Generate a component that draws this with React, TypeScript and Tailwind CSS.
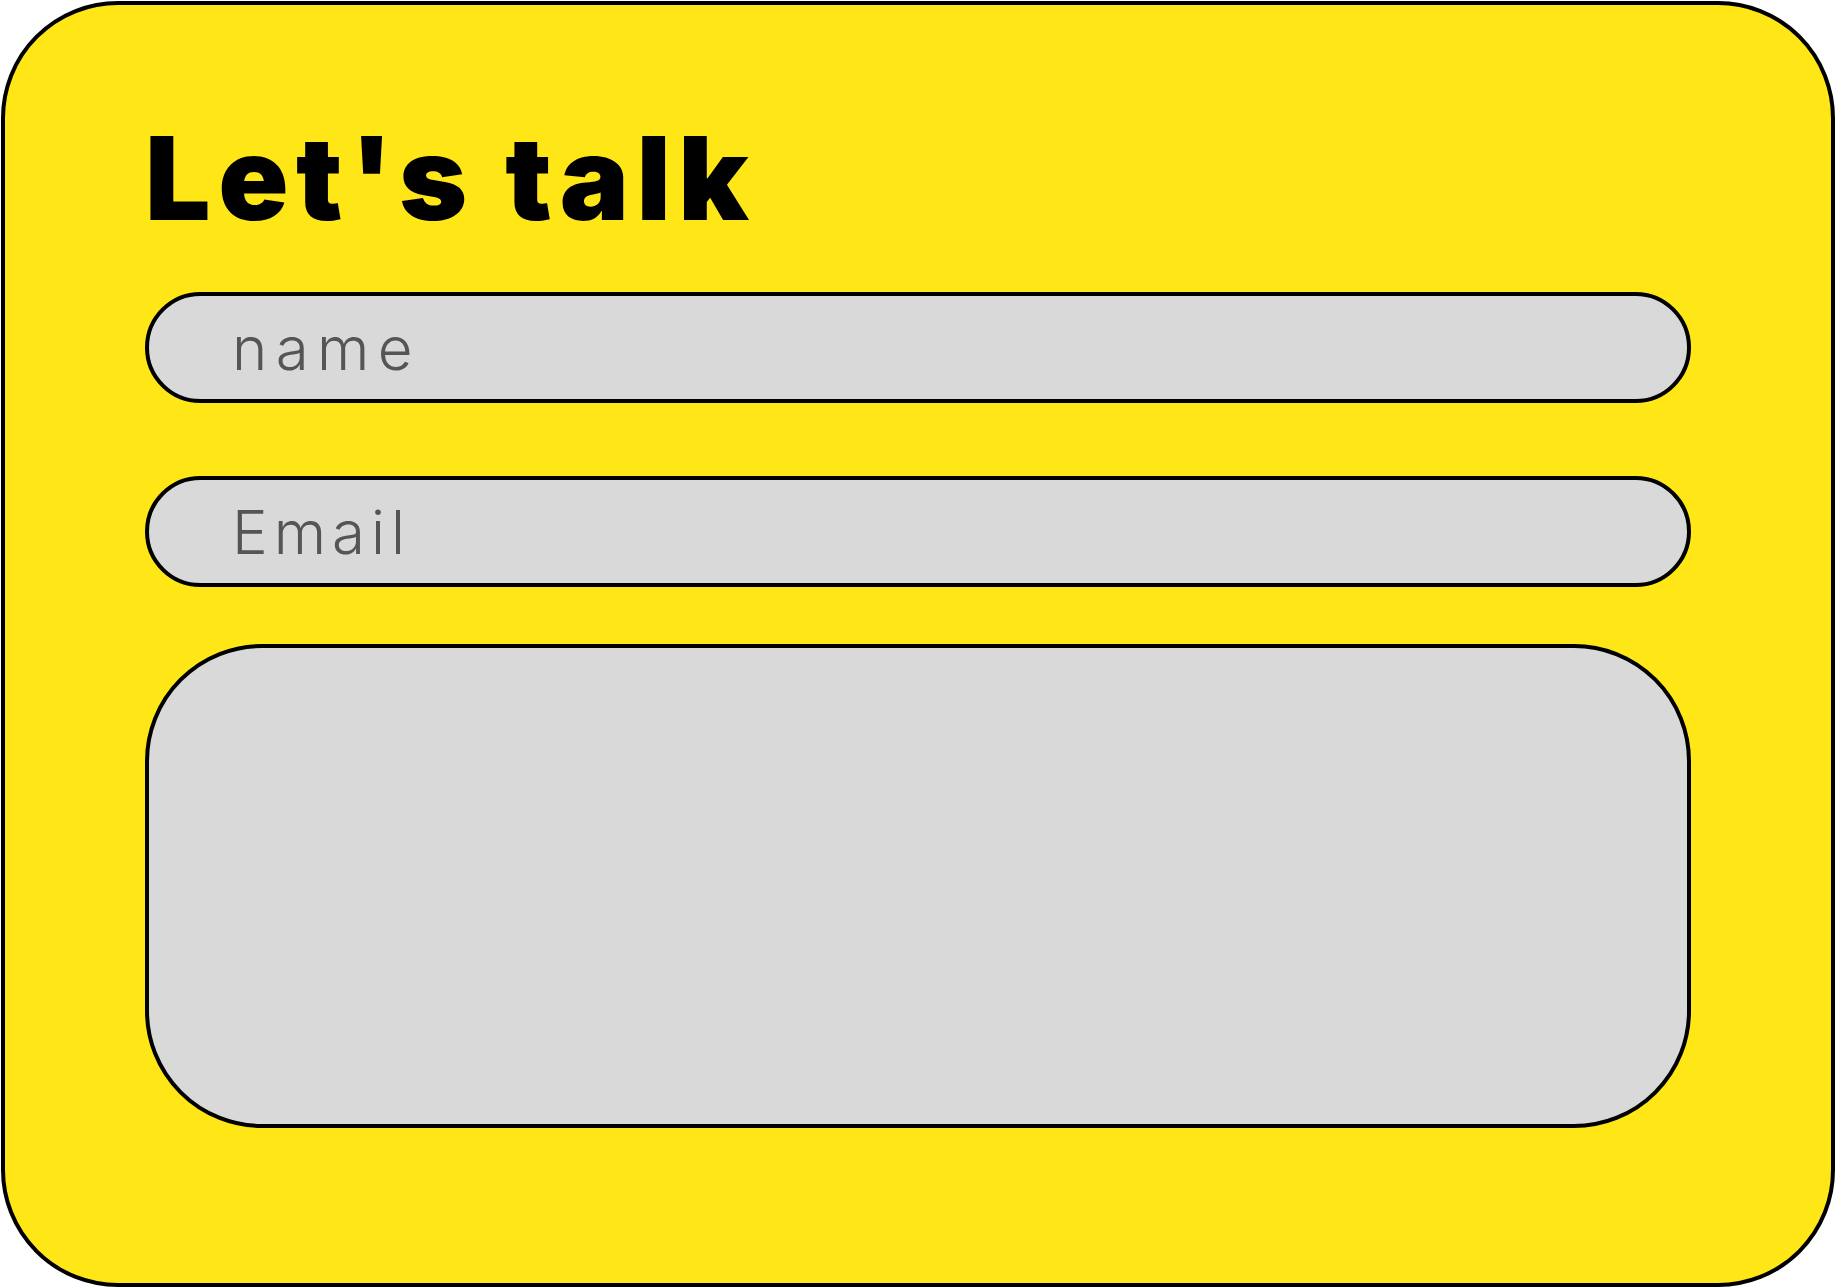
export default function App() {
  return (
    <div className="w-[1836px] h-[1288px] p-[1px] bg-white">
      <div className="w-full h-full bg-[#FFE616] border-4 border-black rounded-[117px] px-[140px] pt-[115px] flex flex-col">
        <h1
          className="text-[116px] leading-[1] font-black text-black tracking-[0.065em] m-0"
          style={{ fontFamily: "Inter, 'Liberation Sans', sans-serif" }}
        >
          Let's talk
        </h1>
        <div className="mt-[56px] h-[111px] w-full rounded-full border-4 border-black bg-[#D9D9D9] flex items-center pl-[83px]">
          <span
            className="text-[60px] font-light text-[#555555] tracking-[0.14em]"
            style={{ fontFamily: "Inter, 'Liberation Sans', sans-serif" }}
          >
            name
          </span>
        </div>
        <div className="mt-[73px] h-[111px] w-full rounded-full border-4 border-black bg-[#D9D9D9] flex items-center pl-[83px]">
          <span
            className="text-[60px] font-light text-[#555555] tracking-[0.1em]"
            style={{ fontFamily: "Inter, 'Liberation Sans', sans-serif" }}
          >
            Email
          </span>
        </div>
        <div className="mt-[57px] h-[484px] w-full rounded-[117px] border-4 border-black bg-[#D9D9D9]" />
      </div>
    </div>
  );
}
